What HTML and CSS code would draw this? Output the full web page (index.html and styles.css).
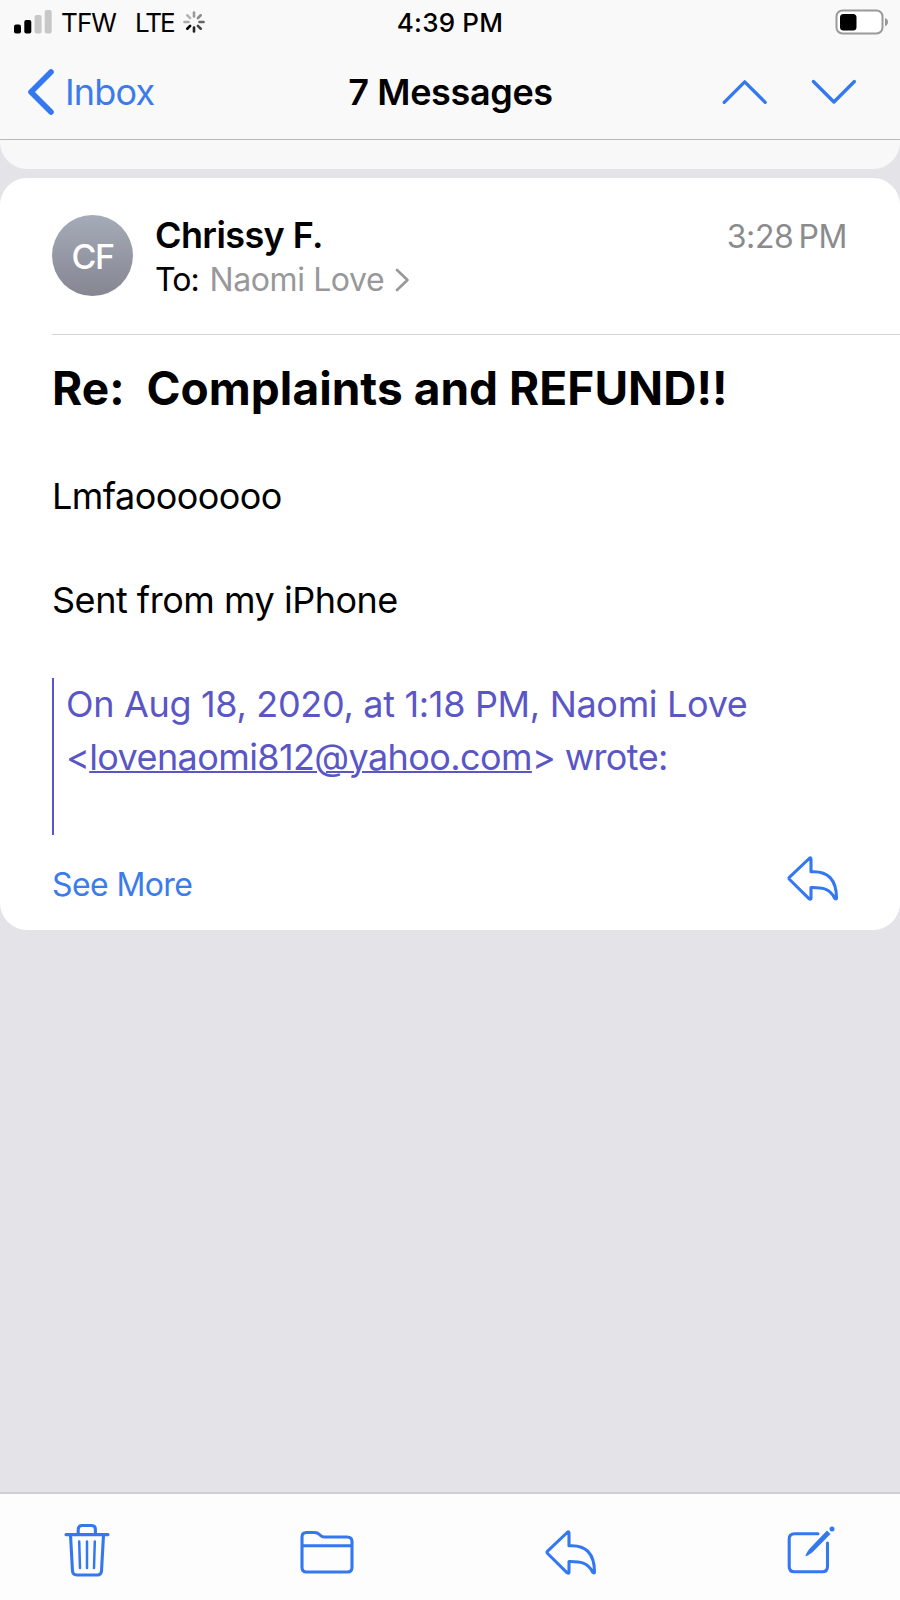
FILE: index.html
```
<!DOCTYPE html>
<html lang="en">
<head>
<meta charset="utf-8">
<title>Mail</title>
<link rel="stylesheet" href="styles.css">
</head>
<body>
<div class="screen">
  <header class="top">
    <div class="status">
      <div class="status-left">
        <svg class="signal" width="38" height="24" viewBox="0 0 38 24">
          <rect x="0" y="14.5" width="7" height="9" rx="2"/>
          <rect x="10.3" y="10" width="7" height="13.5" rx="2"/>
          <rect class="dim" x="20.6" y="5" width="7" height="18.5" rx="2"/>
          <rect class="dim" x="30.7" y="0" width="7" height="23.5" rx="2"/>
        </svg>
        <span class="carrier">TFW</span>
        <span class="network">LTE</span>
        <svg class="spinner" width="22" height="22" viewBox="-11 -11 22 22">
          <path d="M0-5.500V-9.500" stroke="#999"/>
          <path d="M0-5.500V-9.500" stroke="#8a8a8a" transform="rotate(45)"/>
          <path d="M0-5.500V-9.500" stroke="#666" transform="rotate(90)"/>
          <path d="M0-5.500V-9.500" stroke="#444" transform="rotate(135)"/>
          <path d="M0-5.500V-9.500" stroke="#222" transform="rotate(180)"/>
          <path d="M0-5.500V-9.500" stroke="#000" transform="rotate(225)"/>
          <path d="M0-5.500V-9.500" stroke="#aaa" transform="rotate(270)"/>
          <path d="M0-5.500V-9.500" stroke="#b4b4b4" transform="rotate(315)"/>
        </svg>
      </div>
      <div class="clock">4:39 PM</div>
      <svg class="battery" width="54" height="26" viewBox="0 0 54 26">
        <rect x="1.500" y="1.500" width="46" height="23" rx="6" fill="#fff" stroke="#999" stroke-width="2"/>
        <rect x="5" y="5" width="16.500" height="16.500" rx="3.500"/>
        <path d="M50 9c4 1.200 4 7 0 8.200z" fill="#999"/>
      </svg>
    </div>
    <nav class="nav">
      <a class="back">
        <svg width="28" height="46" viewBox="0 0 28 46"><path d="M24 3 4 23l20 20" stroke-width="5.600"/></svg>
        <span>Inbox</span>
      </a>
      <h1 class="title">7 Messages</h1>
      <div class="pager">
        <svg width="46" height="26" viewBox="0 0 46 26"><path d="M2.200 23.300 22.700 2.800l20.500 20.500" stroke-width="3.300"/></svg>
        <svg width="46" height="26" viewBox="0 0 46 26"><path d="M2.400 2.500 22.900 23 43.400 2.500" stroke-width="3.300"/></svg>
      </div>
    </nav>
  </header>
  <main class="thread">
    <div class="previous"></div>
    <article class="card">
      <div class="sender">
        <div class="avatar">CF</div>
        <div class="who">
          <div class="name">Chrissy F.</div>
          <div class="to"><span class="to-label">To:</span><span class="recipient">Naomi Love</span>
            <svg width="16" height="24" viewBox="0 0 16 24"><path d="M2 2l10.500 10L2 22" stroke-width="2.600"/></svg>
          </div>
        </div>
        <time class="time">3:28<span class="meridiem">PM</span></time>
      </div>
      <h2 class="subject">Re:&nbsp; Complaints and REFUND!!</h2>
      <div class="body">
        <p class="reply-text">Lmfaooooooo</p>
        <p class="signature">Sent from my iPhone</p>
        <blockquote class="quote">
          <div class="quote-date">On Aug 18, 2020, at 1:18 PM, Naomi Love</div>
          <div class="quote-from">&lt;<a class="email">lovenaomi812@yahoo.com</a>&gt; wrote:</div>
        </blockquote>
      </div>
      <div class="card-foot">
        <a class="more">See More</a>
        <svg class="reply" width="52" height="46" viewBox="0 0 52 46"><path d="M24 3.200v12.600C41 14.500 49.500 24 49.500 42q0 2-1.800.2C43 32.500 35 31.300 24 31.500V42q0 2-1.800.8L2.600 23.500q-1.200-1.200 0-2.400L22.200 2.500Q24 1 24 3.200z"/></svg>
      </div>
    </article>
  </main>
  <footer class="toolbar">
    <svg class="trash" width="46" height="54" viewBox="0 0 46 54"><path d="M2 11.600h42M14.200 11V6.500q0-4 4-4h9.200q4 0 4 4V11M6.500 12l2 36q.2 4 4.200 4h20.600q4 0 4.200-4l2-36"/><path d="M15.200 18.500l.8 26.500M23 18.500V45M30.800 18.500 30 45" stroke-width="2.500"/></svg>
    <svg class="folder" width="54" height="44" viewBox="0 0 54 44"><path d="M2 37.500V7q0-4.500 4.500-4.500h8q3 0 5 2l1 1q1.500 1.500 4 1.500h22.500Q52 7 52 11.500v26q0 4.500-4.500 4.500h-41Q2 42 2 37.500zM2 15.800h50"/></svg>
    <svg class="respond" width="52" height="46" viewBox="0 0 52 46"><path d="M24 3.200v12.600C41 14.500 49.500 24 49.500 42q0 2-1.800.2C43 32.500 35 31.300 24 31.500V42q0 2-1.800.8L2.600 23.500q-1.200-1.200 0-2.400L22.200 2.500Q24 1 24 3.200z"/></svg>
    <svg class="compose" width="48" height="48" viewBox="0 0 48 48"><path d="M31 7.800H7.500Q2.200 7.800 2.200 13v27.500q0 5.300 5.300 5.300h27.700q5.300 0 5.300-5.300V17"/><path class="solid" d="M40 4.500l3.500 3.500-17 17.200c-2 2-5 4-7 4.900-.8.400-1.200 0-.9-.8.900-2.100 2.600-5.100 4.600-7.200z"/><circle class="solid" cx="45" cy="2.900" r="2.500"/></svg>
  </footer>
</div>
</body>
</html>
```
FILE: styles.css
```
* { box-sizing: border-box; margin: 0; padding: 0; }
body {
  font-family: Inter, "Liberation Sans", sans-serif;
  font-size: 36px;
  color: #000;
  background: #e4e3e8;
}
svg { display: block; flex: none; }
.screen { display: flex; flex-direction: column; width: 900px; height: 1600px; overflow: hidden; }

.top { height: 140px; background: #f9f9f9; border-bottom: 1px solid #b9b9bb; }
.status {
  display: grid;
  grid-template-columns: 1fr auto 1fr;
  align-items: center;
  height: 45px;
  padding: 0 11px 0 14px;
  font-size: 26px;
  line-height: 45px;
}
.status-left { display: flex; align-items: center; }
.signal { margin-top: -1px; }
.signal .dim { fill: #c8c8c8; }
.carrier { margin-left: 9px; width: 74px; letter-spacing: -0.9px; }
.network { letter-spacing: -2px; width: 46px; }
.spinner { margin-top: -1px; margin-left: 2px; stroke-width: 2.6px; stroke-linecap: round; }
.clock { font-weight: 500; letter-spacing: 0.2px; margin-right: 3px; }
.battery { justify-self: end; margin-top: -1px; }

.nav {
  display: grid;
  grid-template-columns: 1fr auto 1fr;
  align-items: center;
  height: 94px;
  padding: 0 26px 0 27px;
  line-height: 93px;
}
.nav svg, .card svg, .toolbar svg { fill: none; stroke: #3478f0; stroke-linecap: round; stroke-linejoin: round; }
.back { display: flex; align-items: center; gap: 10px; color: #3b7cea; letter-spacing: -0.8px; }
.title { font-size: 36px; font-weight: 600; letter-spacing: -0.35px; }
.pager { display: flex; justify-content: flex-end; gap: 43px; padding-right: 17px; }

.thread { flex: 1; }
.previous { height: 29px; background: #f8f8f8; border-radius: 0 0 27px 27px; }
.card { height: 752px; margin-top: 9px; background: #fff; border-radius: 27px; padding-left: 52px; }
.sender { display: flex; height: 157px; padding: 37px 53px 0 0; border-bottom: 1px solid #d2d2d4; }
.avatar {
  width: 81px; height: 81px; border-radius: 50%;
  background: linear-gradient(#a5abb8, #858692);
  color: #fff; font-size: 34px; font-weight: 500; line-height: 83px; text-align: center; letter-spacing: -1.4px;
}
.who { flex: 1; padding-left: 22px; }
.name { margin-top: -1px; font-weight: 600; line-height: 42px; letter-spacing: -0.6px; }
.to { display: flex; align-items: center; font-size: 32px; line-height: 48px; letter-spacing: -0.4px; }
.to-label { width: 54.5px; letter-spacing: -0.9px; }
.recipient { color: #98989b; }
.card .to svg { margin-left: 11px; stroke: #98989b; }
.time { color: #8b8b8e; font-size: 32px; line-height: 44px; letter-spacing: -0.4px; }
.meridiem { margin-left: 5px; }
.subject { font-size: 46px; font-weight: 700; line-height: 60px; height: 135px; padding-top: 23px; letter-spacing: 0.05px; white-space: nowrap; }
.body { line-height: 52.2px; }
.reply-text, .signature { margin-bottom: 52px; }
.reply-text { letter-spacing: -0.56px; }
.signature { letter-spacing: -0.48px; }
.quote { height: 157px; padding-left: 12px; border-left: 2px solid #5856c8; color: #5a56c6; white-space: nowrap; }
.quote-date { letter-spacing: -0.32px; }
.quote-from { letter-spacing: -0.6px; }
.email { text-decoration: underline; text-decoration-thickness: 2px; }
.card-foot { display: flex; justify-content: space-between; padding: 20px 61px 0 0; }
.more { color: #3b7cea; font-size: 32px; line-height: 60px; letter-spacing: -0.6px; }
.reply { margin-top: 1px; }

.toolbar {
  display: flex;
  justify-content: space-between;
  align-items: flex-start;
  height: 108px;
  padding: 0 65px 0 64px;
  background: #fdfdfe;
  border-top: 2px solid #cfced2;
}
.trash { margin-top: 29px; }
.folder, .respond { margin-top: 36px; }
.compose { margin-top: 32px; }
.card .reply, .toolbar svg { stroke-width: 3.1px; }
.toolbar svg .solid { fill: #3478f0; stroke: none; }
```
